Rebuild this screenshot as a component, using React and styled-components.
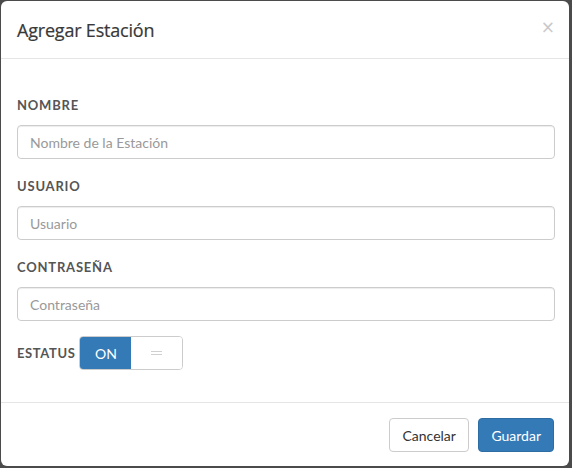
import React, { useState } from "react";
import styled, { createGlobalStyle } from "styled-components";

const GlobalStyle = createGlobalStyle`
  html, body {
    margin: 0;
    padding: 0;
    background: #4b4b4b;
  }
  * {
    box-sizing: border-box;
  }
`;

const Backdrop = styled.div`
  width: 572px;
  height: 468px;
  padding: 1px 3px 2px 1px;
  background: #4b4b4b;
`;

const Modal = styled.div`
  display: flex;
  flex-direction: column;
  width: 568px;
  height: 465px;
  background: #fff;
  border-radius: 6px;
  overflow: hidden;
  font-family: Lato, "Open Sans", sans-serif;
`;

const Header = styled.div`
  display: flex;
  align-items: center;
  justify-content: space-between;
  height: 58px;
  padding: 0 14px 0 16px;
  border-bottom: 1px solid #e5e5e5;
`;

const Title = styled.h4`
  margin: 0;
  font-family: "Open Sans", sans-serif;
  font-size: 18px;
  font-weight: 500;
  color: #383838;
  letter-spacing: -0.2px;
  -webkit-text-stroke: 0.2px #383838;
`;

const Close = styled.button`
  border: 0;
  background: none;
  padding: 0;
  margin-top: -4px;
  font-family: "DejaVu Sans", sans-serif;
  font-size: 17px;
  line-height: 1;
  color: #c9c9c9;
  cursor: pointer;
`;

const Body = styled.div`
  flex: 1;
  padding: 36px 14px 0 16px;
`;

const Group = styled.div`
  margin-bottom: 17px;
`;

const Label = styled.label`
  display: block;
  margin-bottom: 10px;
  font-size: 13px;
  line-height: 20px;
  font-weight: 700;
  letter-spacing: 0.8px;
  text-transform: uppercase;
  color: #555;
`;

const Input = styled.input`
  display: block;
  width: 100%;
  height: 34px;
  padding: 6px 12px;
  border: 1px solid #ccc;
  border-radius: 4px;
  box-shadow: inset 0 1px 1px rgba(0, 0, 0, 0.075);
  font-family: Lato, sans-serif;
  font-size: 14px;
  color: #555;
  outline: none;

  &::placeholder {
    color: #999;
  }
`;

const StatusRow = styled.div`
  display: flex;
  align-items: center;
  gap: 4px;
  margin-top: -2px;

  ${Label} {
    margin: 0;
    letter-spacing: 0.6px;
  }
`;

const Switch = styled.div`
  display: flex;
  width: 104px;
  height: 34px;
  border: 1px solid #ccc;
  border-radius: 4px;
  overflow: hidden;
  cursor: pointer;
`;

const SwitchHalf = styled.span`
  display: flex;
  align-items: center;
  justify-content: center;
  width: 52px;
  font-size: 14px;
  background: ${(p) => (p.$active ? "#337ab7" : "#fff")};
  color: ${(p) => (p.$active ? "#fff" : "#ccc")};
`;

const Handle = styled.span`
  display: block;
  width: 11px;
  height: 4px;
  border-top: 1px solid #d0d0d0;
  border-bottom: 1px solid #d0d0d0;
`;

const Footer = styled.div`
  display: flex;
  justify-content: flex-end;
  gap: 9px;
  height: 64px;
  padding: 15px 15px 0 16px;
  border-top: 1px solid #e5e5e5;
`;

const Button = styled.button`
  height: 34px;
  padding: 0 ${(p) => (p.$primary ? "12px" : "12.5px")};
  border-radius: 4px;
  font-family: Lato, sans-serif;
  font-size: 14px;
  border: 1px solid ${(p) => (p.$primary ? "#2e6da4" : "#ccc")};
  background: ${(p) => (p.$primary ? "#337ab7" : "#fff")};
  color: ${(p) => (p.$primary ? "#fff" : "#333")};
  cursor: pointer;
`;

const fields = [
  { label: "Nombre", placeholder: "Nombre de la Estación" },
  { label: "Usuario", placeholder: "Usuario" },
  { label: "Contraseña", placeholder: "Contraseña", type: "password" },
];

export default function App() {
  const [on, setOn] = useState(true);

  return (
    <>
      <GlobalStyle />
      <Backdrop>
        <Modal>
          <Header>
            <Title>Agregar Estación</Title>
            <Close aria-label="Cerrar">×</Close>
          </Header>
          <Body>
            {fields.map((f) => (
              <Group key={f.label}>
                <Label>{f.label}</Label>
                <Input type={f.type || "text"} placeholder={f.placeholder} />
              </Group>
            ))}
            <StatusRow>
              <Label>Estatus</Label>
              <Switch onClick={() => setOn(!on)}>
                <SwitchHalf $active={on}>{on ? "ON" : <Handle />}</SwitchHalf>
                <SwitchHalf $active={!on}>{on ? <Handle /> : "OFF"}</SwitchHalf>
              </Switch>
            </StatusRow>
          </Body>
          <Footer>
            <Button>Cancelar</Button>
            <Button $primary>Guardar</Button>
          </Footer>
        </Modal>
      </Backdrop>
    </>
  );
}
